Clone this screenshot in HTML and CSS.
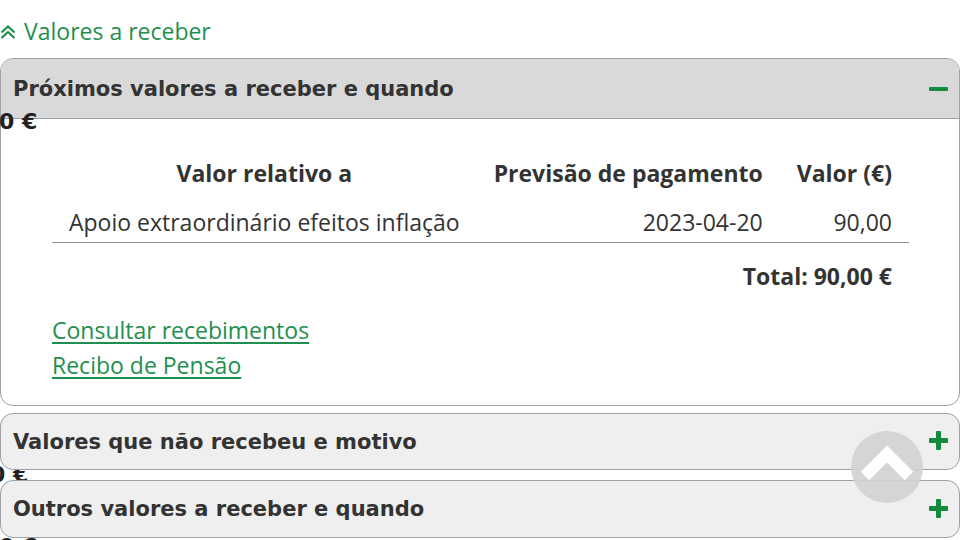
FILE: index.html
```html
<!DOCTYPE html>
<html lang="pt">
<head>
<meta charset="utf-8">
<link rel="stylesheet" href="styles.css">
</head>
<body>
<div class="page">
  <a class="back" href="#">
    <svg class="dchev" viewBox="0 0 16 16" width="16" height="16"><path d="M1.5 8.5 L8 2.5 L14.5 8.5 M1.5 14 L8 8 L14.5 14" fill="none" stroke="#1f8f4f" stroke-width="2.2"/></svg>
    <span>Valores a receber</span>
  </a>

  <section class="panel open">
    <div class="panel-head">
      <h2>Próximos valores a receber e quando</h2>
      <span class="minus"></span>
    </div>
    <span class="stray s1">0 €</span>
    <div class="panel-body">
      <table class="values">
        <thead>
          <tr><th class="c1">Valor relativo a</th><th class="c2">Previsão de pagamento</th><th class="c3">Valor (€)</th></tr>
        </thead>
        <tbody>
          <tr><td class="c1 l">Apoio extraordinário efeitos inflação</td><td class="c2">2023-04-20</td><td class="c3">90,00</td></tr>
        </tbody>
      </table>
      <div class="total">Total: 90,00 €</div>
      <div class="links">
        <a href="#">Consultar recebimentos</a>
        <a href="#">Recibo de Pensão</a>
      </div>
    </div>
  </section>

  <div class="stack first">
    <span class="stray s2">0 €</span>
    <section class="panel closed">
      <div class="panel-head">
        <h2>Valores que não recebeu e motivo</h2>
        <span class="plus"></span>
      </div>
    </section>
  </div>

  <div class="stack second">
    <span class="stray s3">0 €</span>
    <section class="panel closed">
      <div class="panel-head">
        <h2>Outros valores a receber e quando</h2>
        <span class="plus"></span>
      </div>
    </section>
  </div>

  <a class="to-top" href="#">
    <svg viewBox="0 0 72 72" width="72" height="72"><path d="M14 45 L36 23 L58 45" fill="none" stroke="#fff" stroke-width="12"/></svg>
  </a>
</div>
</body>
</html>
```

FILE: styles.css
```css
html, body {
  margin: 0;
  padding: 0;
  background: #fff;
}
body {
  font-family: "Open Sans", "Liberation Sans", sans-serif;
  color: #333;
  width: 960px;
  height: 540px;
  overflow: hidden;
}
.page {
  position: relative;
  padding-top: 16px;
}
.back {
  display: flex;
  align-items: center;
  gap: 8px;
  color: #1f8f4f;
  text-decoration: none;
  font-size: 23px;
  line-height: 30px;
  height: 30px;
  margin-bottom: 12px;
}
.dchev {
  margin-top: 2px;
}
.panel {
  position: relative;
  border: 1.5px solid #9ba1a6;
  border-radius: 13px;
  background: #fff;
}
.panel-head {
  display: flex;
  align-items: center;
  justify-content: space-between;
  padding: 0 11px 0 12px;
  height: 59px;
  border-radius: 12px 12px 0 0;
}
.open .panel-head {
  background: #d9d9d9;
  border-bottom: 1.5px solid #9ba1a6;
}
.closed {
  background: #efefef;
}
.closed .panel-head {
  height: 55px;
}
.second .panel-head {
  height: 56px;
}
.panel-head h2 {
  margin: 0;
  font-family: "DejaVu Sans", sans-serif;
  font-weight: 700;
  font-size: 21px;
  color: #333;
}
.minus {
  width: 19px;
  height: 4px;
  background: #138a3e;
  border-radius: 1px;
}
.plus {
  position: relative;
  width: 19px;
  height: 19px;
  margin-top: -2px;
}
.plus::before, .plus::after {
  content: "";
  position: absolute;
  background: #138a3e;
  border-radius: 1px;
}
.plus::before {
  left: 0; right: 0; top: 7px; height: 5px;
}
.plus::after {
  top: 0; bottom: 0; left: 7px; width: 5px;
}
.stray {
  position: absolute;
  left: 0;
  font-family: "DejaVu Sans", sans-serif;
  font-weight: 700;
  font-size: 22px;
  color: #222;
  line-height: 22px;
  white-space: nowrap;
}
.s1 { top: 52px; left: -2px; }
.panel-body {
  padding: 39px 51px 22px 51px;
}
.values {
  width: 856px;
  border-collapse: collapse;
  font-size: 23px;
}
.values th {
  font-weight: 700;
  padding: 0 17px 18px;
  line-height: 31px;
  white-space: nowrap;
}
.values td {
  padding: 0 17px 4px;
  line-height: 31px;
  text-align: right;
  border-bottom: 1.5px solid #8f9599;
  white-space: nowrap;
}
.values .c1 { text-align: center; }
.values td.l { text-align: left; }
.total {
  box-sizing: border-box;
  text-align: right;
  font-weight: 700;
  font-size: 23px;
  line-height: 31px;
  padding: 18px 16px 0 0;
  width: 856px;
}
.links {
  display: flex;
  flex-direction: column;
  padding-top: 21px;
}
.links a {
  color: #1f8f4f;
  font-size: 23px;
  line-height: 35px;
  text-decoration: underline;
  text-underline-offset: 3px;
  text-decoration-thickness: 1.5px;
  align-self: flex-start;
}
.stack {
  position: relative;
}
.stack.first { margin-top: 7px; }
.stack.second { margin-top: 10px; }
.stack .s2 { top: 51px; left: -10px; }
.stack .s3 { top: 56px; left: -1px; }
.stack .panel { position: relative; z-index: 1; }
.to-top {
  position: absolute;
  left: 851px;
  top: 431px;
  width: 72px;
  height: 72px;
  border-radius: 50%;
  background: rgba(210, 210, 210, 0.9);
  z-index: 5;
  display: block;
}
.to-top svg { display: block; }
```
